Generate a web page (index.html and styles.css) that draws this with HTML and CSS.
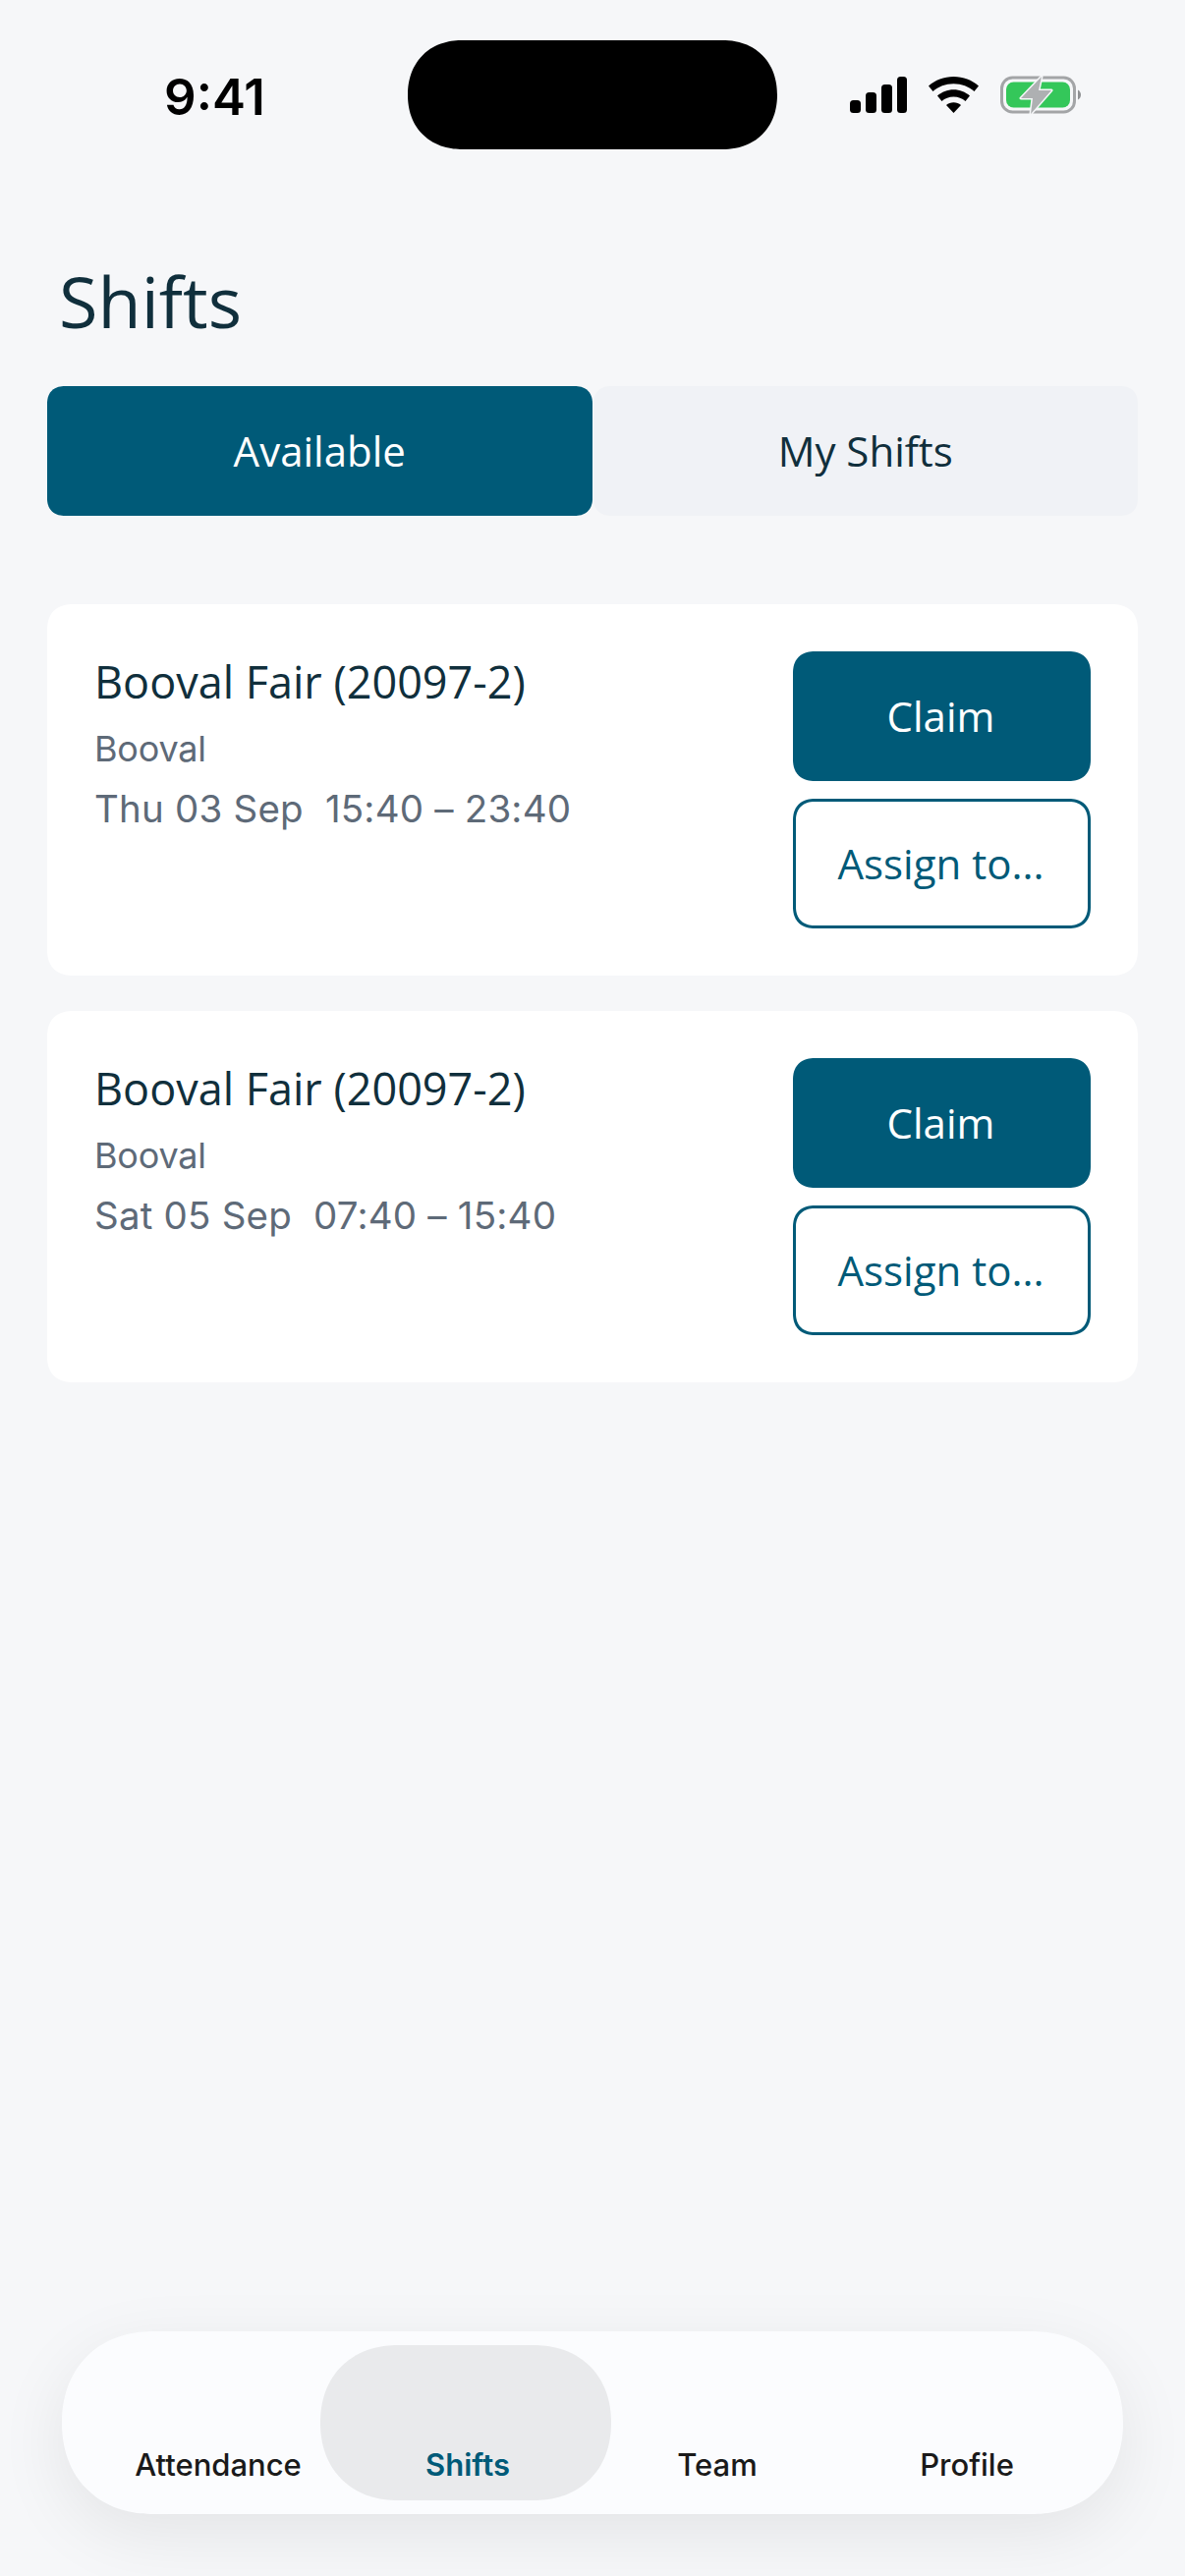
FILE: index.html
```html
<!DOCTYPE html>
<html lang="en">
<head>
<meta charset="utf-8">
<title>Shifts</title>
<link rel="stylesheet" href="styles.css">
</head>
<body>
<div class="page">
  <header class="status">
    <div class="time">9:41</div>
    <div class="island"></div>
    <div class="status-icons">
      <svg class="signal" width="58" height="37" viewBox="0 0 58 37"><rect x="0" y="24" width="11" height="13" rx="3.5"/><rect x="16" y="16" width="11" height="21" rx="3.5"/><rect x="32" y="8" width="11" height="29" rx="3.5"/><rect x="48" y="0" width="10" height="37" rx="3.5"/></svg>
      <svg class="wifi" width="51" height="37" viewBox="0 0 51 37"><path d="M0 9.5C7 3.5 15.5 0 25.500 0S44 3.500 51 9.500L46.500 15C41 10.300 33.700 7.300 25.500 7.300S10 10.300 4.500 15Z"/><path d="M9 19.500C13.500 15.700 19.200 13.300 25.500 13.300S37.500 15.700 42 19.500L37.500 25C34.300 22.300 30.100 20.600 25.500 20.600S16.700 22.300 13.500 25Z"/><path d="M18 29C20 27.300 22.600 26.300 25.500 26.300S31 27.300 33 29L25.500 37Z"/></svg>
      <svg class="battery" width="82" height="40" viewBox="0 0 82 40"><rect x="1.500" y="2" width="74" height="35" rx="11" fill="none" stroke="#a3a5a7" stroke-width="3"/><rect x="6" y="6.500" width="65" height="26" rx="7.500" fill="#34c75a"/><path d="M79 14.500C81 15.500 82 17.500 82 19.500S81 23.500 79 24.500Z" fill="#8e9092"/><path d="M42 1L21 23H33L31 39L52 15H39Z" fill="#aeb0b2" stroke="#f6f7f9" stroke-width="3" stroke-linejoin="round" paint-order="stroke"/></svg>
    </div>
  </header>

  <h1 class="title">Shifts</h1>

  <nav class="segments">
    <button class="segment segment-on">Available</button>
    <button class="segment">My Shifts</button>
  </nav>

  <main class="list">
    <article class="card">
      <div class="info">
        <h2 class="name">Booval Fair (20097-2)</h2>
        <p class="place">Booval</p>
        <p class="when">Thu 03 Sep&nbsp; 15:40 – 23:40</p>
      </div>
      <div class="actions">
        <button class="btn btn-solid">Claim</button>
        <button class="btn btn-line">Assign to...</button>
      </div>
    </article>
    <article class="card">
      <div class="info">
        <h2 class="name">Booval Fair (20097-2)</h2>
        <p class="place">Booval</p>
        <p class="when">Sat 05 Sep&nbsp; 07:40 – 15:40</p>
      </div>
      <div class="actions">
        <button class="btn btn-solid">Claim</button>
        <button class="btn btn-line">Assign to...</button>
      </div>
    </article>
  </main>

  <footer class="tabbar">
    <div class="tab"><span>Attendance</span></div>
    <div class="tab tab-on"><span>Shifts</span></div>
    <div class="tab"><span>Team</span></div>
    <div class="tab"><span>Profile</span></div>
  </footer>
</div>
</body>
</html>
```

FILE: styles.css
```css
* { box-sizing: border-box; }
html, body { margin: 0; padding: 0; }
body { background: #f6f7f9; font-family: "Open Sans", sans-serif; }
button { font: inherit; border: 0; padding: 0; }

.page {
  width: 1206px;
  height: 2622px;
  display: flex;
  flex-direction: column;
  overflow: hidden;
}

.status {
  height: 152px;
  padding-top: 41px;
  display: flex;
  align-items: flex-start;
  flex: none;
}
.time {
  width: 415px;
  height: 115px;
  line-height: 115px;
  text-align: center;
  padding-left: 22px;
  font-family: Inter, sans-serif;
  font-size: 51px;
  font-weight: 600;
  color: #000;
}
.island {
  width: 376px;
  height: 111px;
  border-radius: 56px;
  corner-shape: superellipse(1.12);
  background: #000;
  flex: none;
}
.status-icons {
  height: 111px;
  padding-left: 74px;
  display: flex;
  align-items: center;
  gap: 22px;
}
.signal, .wifi { fill: #000; }

.title {
  margin: 108px 0 0 60px;
  font-size: 72px;
  line-height: 92px;
  font-weight: 400;
  color: #102f3c;
}

.segments {
  margin: 41px 48px 0;
  display: flex;
  gap: 1px;
}
.segment {
  flex: 1;
  height: 132px;
  padding-bottom: 2px;
  border-radius: 18px;
  corner-shape: superellipse(1.2);
  background: #f0f2f6;
  color: #102f3c;
  font-size: 42px;
}
.segment-on { background: #005a78; color: #fff; }

.list {
  margin: 90px 48px 0;
  display: flex;
  flex-direction: column;
  gap: 36px;
}
.card {
  height: 378px;
  padding: 48px;
  background: #fff;
  border-radius: 26px;
  corner-shape: superellipse(1.2);
  display: flex;
  justify-content: space-between;
}
.info { display: flex; flex-direction: column; }
.name {
  margin: 1px 0 0;
  font-size: 45px;
  line-height: 60px;
  font-weight: 400;
  color: #102f3c;
}
.place {
  margin: 16px 0 0;
  font-family: Inter, sans-serif;
  font-size: 36px;
  line-height: 44px;
  letter-spacing: -0.2px;
  color: #5e6a78;
}
.when {
  margin: 17px 0 0;
  font-family: Inter, sans-serif;
  font-size: 38.5px;
  line-height: 44px;
  letter-spacing: 0.2px;
  color: #5e6a78;
}
.actions {
  width: 303px;
  display: flex;
  flex-direction: column;
  gap: 18px;
}
.btn {
  height: 132px;
  padding-bottom: 2px;
  padding-right: 2px;
  border-radius: 22px;
  corner-shape: superellipse(1.2);
  font-size: 42px;
}
.btn-solid { background: #005a78; color: #fff; }
.btn-line { background: #fff; color: #005a78; border: 3px solid #005a78; }

.tabbar {
  margin: auto 63px 63px;
  height: 186px;
  padding: 14px 32px;
  flex: none;
  isolation: isolate;
  background: #fbfcfe;
  border-radius: 93px;
  corner-shape: superellipse(1.12);
  box-shadow: 0 20px 70px rgba(0, 0, 0, 0.08);
  display: grid;
  grid-template-columns: repeat(4, 1fr);
  font-family: Inter, sans-serif;
  font-size: 31px;
  font-weight: 500;
  color: #1a1a1a;
}
.tab {
  position: relative;
  display: flex;
  align-items: flex-end;
  justify-content: center;
  padding-bottom: 18px;
  line-height: 36px;
}
.tab-on {
  color: #005a78;
  font-weight: 600;
}
.tab-on::before {
  content: "";
  position: absolute;
  inset: 0 -19px 0 -23px;
  z-index: -1;
  background: #e9eaec;
  border-radius: 79px;
  corner-shape: superellipse(1.12);
}
```
